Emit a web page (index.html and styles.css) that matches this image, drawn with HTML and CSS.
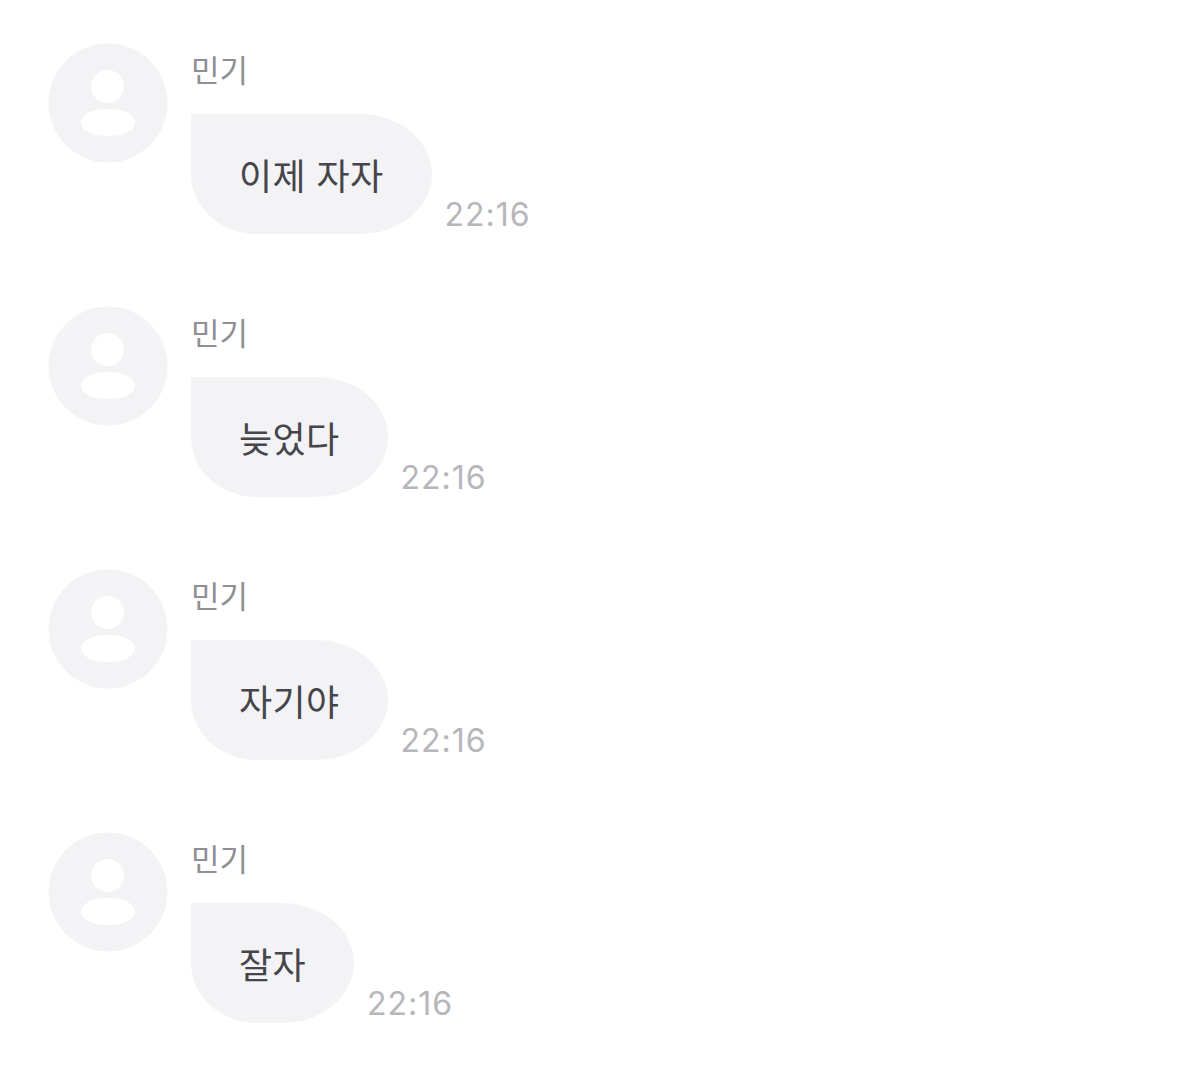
FILE: index.html
```html
<!DOCTYPE html>
<html lang="ko">
<head>
  <meta charset="UTF-8">
  <meta name="viewport" content="width=device-width, initial-scale=1.0">
  <title>민기</title>
  <link rel="stylesheet" href="styles.css">
</head>

<body>
  <div class="chat">
    <div class="msg">
      <svg class="avatar" viewBox="0 0 120 120">
        <circle cx="60" cy="60" r="59.5" fill="#f3f3f6"/>
        <circle cx="59.5" cy="43.5" r="16.5" fill="#fff"/>
        <rect x="33" y="66" width="54" height="27" rx="25" ry="13.5" fill="#fff"/>
      </svg>
      <div class="body">
        <div class="name">민기</div>
        <div class="line">
          <div class="bubble">이제 자자</div>
          <span class="time">22:16</span>
        </div>
      </div>
    </div>

    <div class="msg">
      <svg class="avatar" viewBox="0 0 120 120">
        <circle cx="60" cy="60" r="59.5" fill="#f3f3f6"/>
        <circle cx="59.5" cy="43.5" r="16.5" fill="#fff"/>
        <rect x="33" y="66" width="54" height="27" rx="25" ry="13.5" fill="#fff"/>
      </svg>
      <div class="body">
        <div class="name">민기</div>
        <div class="line">
          <div class="bubble">늦었다</div>
          <span class="time">22:16</span>
        </div>
      </div>
    </div>

    <div class="msg">
      <svg class="avatar" viewBox="0 0 120 120">
        <circle cx="60" cy="60" r="59.5" fill="#f3f3f6"/>
        <circle cx="59.5" cy="43.5" r="16.5" fill="#fff"/>
        <rect x="33" y="66" width="54" height="27" rx="25" ry="13.5" fill="#fff"/>
      </svg>
      <div class="body">
        <div class="name">민기</div>
        <div class="line">
          <div class="bubble">자기야</div>
          <span class="time">22:16</span>
        </div>
      </div>
    </div>

    <div class="msg">
      <svg class="avatar" viewBox="0 0 120 120">
        <circle cx="60" cy="60" r="59.5" fill="#f3f3f6"/>
        <circle cx="59.5" cy="43.5" r="16.5" fill="#fff"/>
        <rect x="33" y="66" width="54" height="27" rx="25" ry="13.5" fill="#fff"/>
      </svg>
      <div class="body">
        <div class="name">민기</div>
        <div class="line">
          <div class="bubble">잘자</div>
          <span class="time">22:16</span>
        </div>
      </div>
    </div>
  </div>
</body>
</html>
```

FILE: styles.css
```css
body {
  margin: 0;
  background: #fff;
  font-family: "Noto Sans CJK KR", "Noto Sans", sans-serif;
}

.chat {
  display: flex;
  flex-direction: column;
  gap: 23px;
  padding: 43px 0 0 48px;
}

.msg {
  display: flex;
  gap: 23px;
  height: 240px;
}

.avatar {
  width: 120px;
  height: 120px;
  flex-shrink: 0;
}

.name {
  height: 71px;
  font-size: 31px;
  line-height: 52px;
  color: #8e8e93;
}

.line {
  display: flex;
  align-items: flex-end;
  gap: 13px;
}

.bubble {
  height: 120px;
  padding: 0 48px;
  background: #f3f3f6;
  border-radius: 0 72px 72px 66px / 0 60px 60px 60px;
  font-size: 36px;
  letter-spacing: 0.4px;
  line-height: 120px;
  color: #45454b;
}

.time {
  font-family: Inter, "Liberation Sans", sans-serif;
  font-size: 32px;
  letter-spacing: 1px;
  line-height: 38px;
  color: #b6b6bb;
}
```
